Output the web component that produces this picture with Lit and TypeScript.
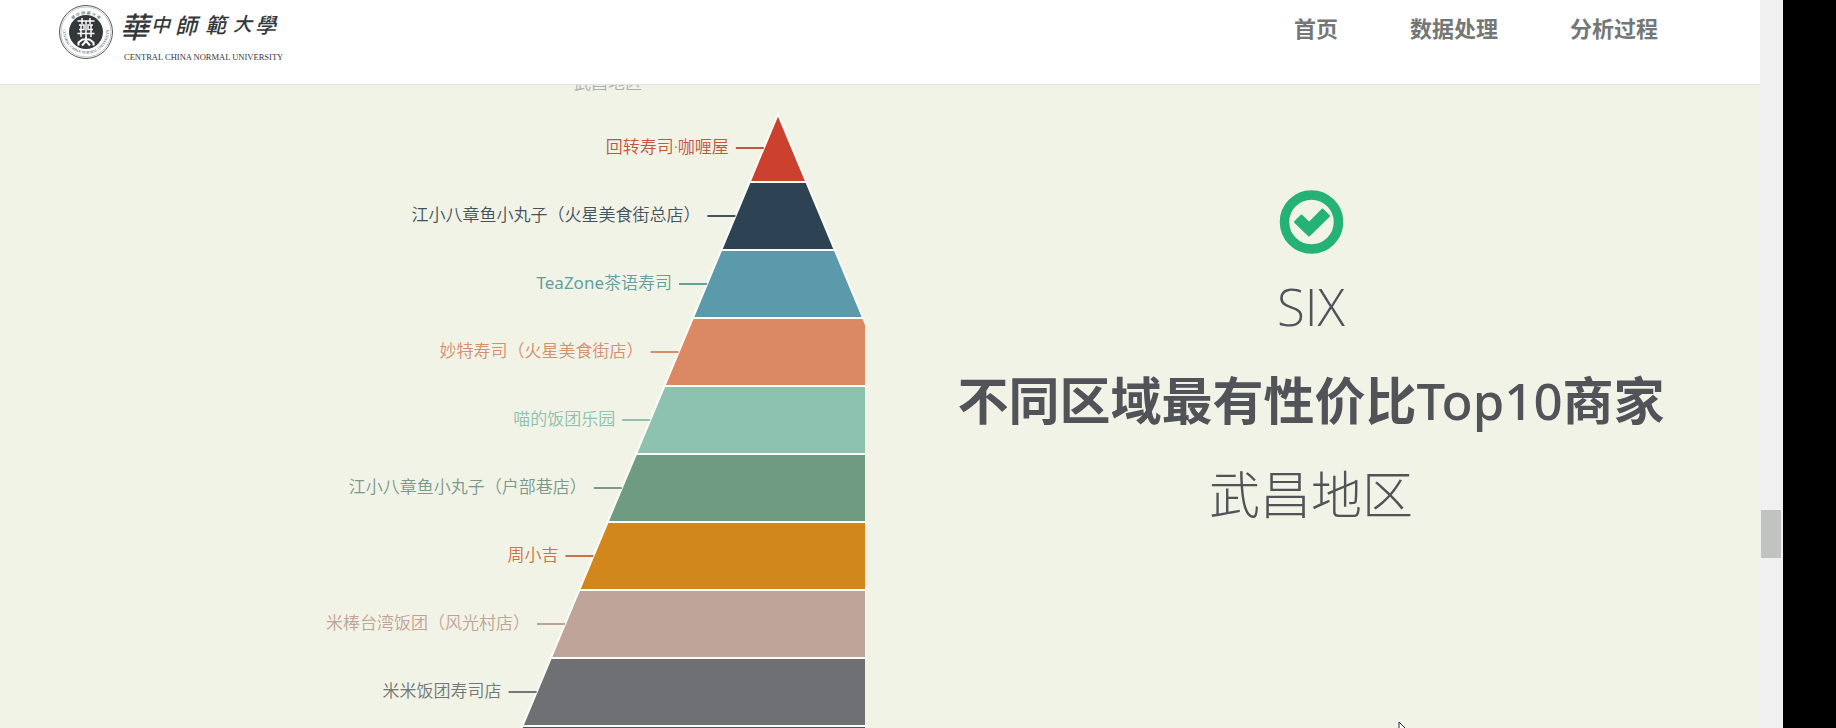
import { LitElement, html, svg, css } from "lit";
import { customElement } from "lit/decorators.js";

interface Slice {
  latin?: string;
  name: string;
  fill: string;
  ink: string;
}

const SLICES: Slice[] = [
  { name: "回转寿司·咖喱屋", fill: "#cb412d", ink: "#c4553c" },
  { name: "江小八章鱼小丸子（火星美食街总店）", fill: "#2d4353", ink: "#45525b" },
  { latin: "TeaZone", name: "茶语寿司", fill: "#5b9aab", ink: "#629f9f" },
  { name: "妙特寿司（火星美食街店）", fill: "#da8962", ink: "#d68f6b" },
  { name: "喵的饭团乐园", fill: "#8dc1b0", ink: "#8dc1b0" },
  { name: "江小八章鱼小丸子（户部巷店）", fill: "#6f9b83", ink: "#7b988c" },
  { name: "周小吉", fill: "#d2871c", ink: "#cd7048" },
  { name: "米棒台湾饭团（风光村店）", fill: "#bfa499", ink: "#c3a296" },
  { name: "米米饭团寿司店", fill: "#6f7074", ink: "#737777" },
  { name: "", fill: "#4b565b", ink: "#4b565b" },
];

const ROW = 68;
const APEX_X = 745;
const APEX_Y = 29;
const SPREAD = 284 / 680;

@customElement("funnel-chart")
export class FunnelChart extends LitElement {
  static styles = css`
    :host {
      display: block;
    }
    .chart {
      display: block;
      width: 100%;
      height: auto;
      overflow: hidden;
      font-family: "Noto Sans", "Noto Sans CJK SC", sans-serif;
      font-size: 17px;
      font-weight: 350;
    }
    .slice {
      stroke: #fdfdf8;
      stroke-width: 2;
    }
    .leader {
      stroke-width: 2;
    }
    .label {
      text-anchor: end;
    }
    .latin {
      font-weight: 400;
    }
    .caption {
      fill: #a9b2ac;
      text-anchor: middle;
    }
  `;

  private slice(s: Slice, i: number) {
    const top = i * ROW;
    const bottom = top + ROW;
    const a = top * SPREAD;
    const b = bottom * SPREAD;
    const mid = top + ROW / 2;
    const edge = APEX_X - mid * SPREAD;
    const points = [
      [APEX_X - a, APEX_Y + top],
      [APEX_X + a, APEX_Y + top],
      [APEX_X + b, APEX_Y + bottom],
      [APEX_X - b, APEX_Y + bottom],
    ]
      .map((p) => p.join(","))
      .join(" ");
    return svg`
      <polygon class="slice" points=${points} fill=${s.fill}></polygon>
      <line class="leader" x1=${edge - 28} x2=${edge} y1=${APEX_Y + mid} y2=${APEX_Y + mid} stroke=${s.ink}></line>
      <text class="label" x=${edge - 35} y=${APEX_Y + mid + 5} fill=${s.ink}><tspan class="latin">${s.latin ?? ""}</tspan>${s.name}</text>
    `;
  }

  render() {
    return html`
      <svg class="chart" viewBox="0 0 832 712" role="img" aria-label="武昌地区">
        <text class="caption" x="575" y="4">武昌地区</text>
        ${SLICES.map((s, i) => this.slice(s, i))}
      </svg>
    `;
  }
}

@customElement("university-logo")
export class UniversityLogo extends LitElement {
  static styles = css`
    :host {
      display: block;
    }
    .logo {
      display: block;
    }
    .brush {
      font-family: "Noto Sans CJK TC", sans-serif;
      font-weight: 500;
      font-style: italic;
      fill: #33383a;
    }
    .latin {
      font-family: "Liberation Serif", serif;
      font-size: 17px;
      fill: #33383a;
    }
    .ring-text {
      font-family: "Liberation Serif", "Noto Sans CJK TC", serif;
      font-size: 8px;
      fill: #4a4f50;
    }
  `;

  render() {
    return html`
      <svg class="logo" width="240" height="60" viewBox="0 0 480 120" role="img" aria-label="華中師範大學">
        <defs>
          <path id="lower" d="M9 44 A46 46 0 1 0 99 44"></path>
          <path id="upper" d="M24 36 A37 37 0 0 1 84 36"></path>
        </defs>
        <circle cx="54" cy="56" r="53" fill="#fff" stroke="#555b5c" stroke-width="2"></circle>
        <circle cx="54" cy="56" r="50" fill="none" stroke="#8b9090"></circle>
        <circle cx="54" cy="56" r="34" fill="#33383a"></circle>
        <g fill="none" stroke="#fff" stroke-width="3">
          <path d="M37 34H71M46 28V40M62 28V40M54 34V66M40 42H50V51H40M68 42H58V51H68M37 59H71M44 42V66M64 42V66"></path>
          <path d="M39 83V77L47 71H61L69 77V83M54 66V74L46 83M54 74L62 83" stroke-width="4"></path>
        </g>
        <text class="ring-text"><textPath href="#lower" startOffset="50%" text-anchor="middle">CENTRAL CHINA NORMAL UNIVERSITY</textPath></text>
        <text class="ring-text"><textPath href="#upper" startOffset="50%" text-anchor="middle">華 中 師 範 大 學</textPath></text>
        <text class="brush">
          <tspan x="122" y="68" font-size="58">華</tspan><tspan x="184" y="56" font-size="38">中</tspan><tspan x="232" y="60" font-size="44">師</tspan><tspan x="292" y="58" font-size="42">範</tspan><tspan x="348" y="54" font-size="38">大</tspan><tspan x="392" y="58" font-size="42">學</tspan>
        </text>
        <text class="latin" x="130" y="111">CENTRAL CHINA NORMAL UNIVERSITY</text>
      </svg>
    `;
  }
}

@customElement("app-root")
export class AppRoot extends LitElement {
  static styles = css`
    :host {
      display: grid;
      grid-template-columns: minmax(0, 1fr) 23px 53px;
      height: 100vh;
      overflow: hidden;
      position: relative;
      background: #f1f3e6;
      color: #505459;
      font-family: "Open Sans", "Noto Sans CJK SC", sans-serif;
    }
    .page {
      display: flex;
      flex-direction: column;
      min-height: 0;
      overflow: hidden;
    }
    .header {
      display: flex;
      flex: none;
      justify-content: space-between;
      align-items: flex-start;
      box-sizing: border-box;
      height: 85px;
      padding: 4px 102px 0 59px;
      background: #fff;
      border-bottom: 1px solid #dfe1e4;
    }
    .nav {
      display: flex;
      gap: 72px;
      padding-top: 8px;
    }
    .nav-link {
      color: #747776;
      font-size: 22px;
      font-weight: 700;
      line-height: 32px;
      text-decoration: none;
    }
    .section {
      display: grid;
      grid-template-columns: minmax(0, 1fr) minmax(0, 1fr);
      gap: 30px;
      align-items: start;
      padding: 0 33px;
    }
    .summary {
      display: flex;
      flex-direction: column;
      align-items: center;
      padding-top: 105px;
      text-align: center;
    }
    .check {
      display: block;
      width: 64px;
      height: 64px;
      margin-bottom: 17px;
    }
    .heading {
      margin: 0 0 24px;
      font-size: 51px;
      line-height: 70px;
      font-weight: 300;
      white-space: nowrap;
    }
    .strong {
      font-weight: 700;
    }
    .latin {
      font-family: "Noto Sans", sans-serif;
      font-weight: 500;
    }
    .scrollbar {
      display: grid;
      grid-template-rows: 510fr 48fr 170fr;
      padding: 0 2px 0 1px;
      background: #f0f0f0;
    }
    .thumb {
      grid-row: 2;
      background: #c1c3c0;
    }
    .edge {
      background: #000;
    }
    .pointer {
      position: absolute;
      left: 1398px;
      top: 721px;
    }
  `;

  render() {
    return html`
      <div class="page">
        <header class="header">
          <university-logo></university-logo>
          <nav class="nav">
            <a class="nav-link" href="#home">首页</a>
            <a class="nav-link" href="#data">数据处理</a>
            <a class="nav-link" href="#analysis">分析过程</a>
          </nav>
        </header>
        <main class="section">
          <funnel-chart></funnel-chart>
          <div class="summary">
            <svg class="check" viewBox="0 0 64 64" aria-hidden="true">
              <circle cx="32.500" cy="32" r="27" fill="none" stroke="#25b276" stroke-width="9.500"></circle>
              <path d="M16 32L22.500 25.500L30.200 33L43.500 19.500L50 26L30 45.500Z" fill="#25b276" stroke="#25b276" stroke-width="2" stroke-linejoin="round"></path>
            </svg>
            <h2 class="heading">SIX</h2>
            <h2 class="heading strong">不同区域最有性价比<span class="latin">Top10</span>商家</h2>
            <h2 class="heading">武昌地区</h2>
          </div>
        </main>
      </div>
      <div class="scrollbar"><div class="thumb"></div></div>
      <div class="edge"></div>
      <svg class="pointer" width="14" height="20" viewBox="0 0 14 20" aria-hidden="true">
        <path d="M1 1V16L4.500 12.500L7 18L9 17L6.800 12H12Z" fill="#fff" stroke="#2b2f36"></path>
      </svg>
    `;
  }
}
